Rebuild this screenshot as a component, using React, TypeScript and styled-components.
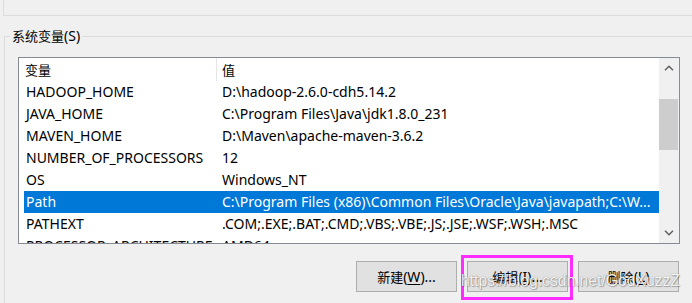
import React from "react";
import styled, { createGlobalStyle } from "styled-components";

const GlobalStyle = createGlobalStyle`
  html, body {
    margin: 0;
    padding: 0;
    background: #f0f0f0;
  }
  body {
    font-family: "Noto Sans", "Noto Sans CJK SC", sans-serif;
    font-size: 14px;
    color: #000;
  }
`;

const Window = styled.div`
  position: relative;
  width: 692px;
  height: 303px;
  overflow: hidden;
  background: #f0f0f0;
`;

// bottom-left corner of the group box above (user variables)
const UpperGroupEdge = styled.div`
  height: 15px;
  margin-left: 3px;
  border-left: 1px solid #dcdcdc;
  border-bottom: 1px solid #dcdcdc;
`;

const Group = styled.fieldset`
  margin: 10px 0 0 4px;
  padding: 11px 0 0 13px;
  height: 300px;
  min-width: 0;
  border: 1px solid #dcdcdc;
  border-right: none;
  border-bottom: none;
`;

const Legend = styled.legend`
  margin-left: -8px;
  padding: 0 2px;
  line-height: 20px;
  font-size: 14px;
`;

const Han = styled.span`
  font-family: "Noto Sans CJK SC", sans-serif;
  font-size: 13px;
`;

const Key = styled.span`
  text-decoration: underline;
  text-underline-offset: 2px;
`;

const Content = styled.div`
  width: 662px;
  display: flex;
  flex-direction: column;
`;

const ListBox = styled.div`
  height: 185px;
  border: 1px solid #868b93;
  background: #fff;
  display: flex;
  overflow: hidden;
`;

const Rows = styled.div`
  flex: 1;
  min-width: 0;
  overflow: hidden;
`;

const Header = styled.div`
  display: grid;
  grid-template-columns: 198px 1fr;
  height: 23px;
  line-height: 23px;
`;

const HeaderCell = styled.div<{ $first?: boolean }>`
  padding-left: ${(p) => (p.$first ? "6px" : "5px")};
  border-right: ${(p) => (p.$first ? "1px solid #e5e5e5" : "none")};
`;

const Row = styled.div<{ $selected?: boolean }>`
  display: grid;
  grid-template-columns: 193px 1fr;
  height: 22px;
  line-height: 22px;
  margin-left: 5px;
  white-space: nowrap;
  background: ${(p) => (p.$selected ? "#0078d7" : "transparent")};
  color: ${(p) => (p.$selected ? "#fff" : "#000")};
`;

const Cell = styled.div<{ $first?: boolean }>`
  padding-left: ${(p) => (p.$first ? "2px" : "5px")};
  overflow: hidden;
`;

const Scrollbar = styled.div`
  width: 20px;
  background: #f0f0f0;
  display: flex;
  flex-direction: column;
`;

const Arrow = styled.div`
  height: 20px;
  display: flex;
  align-items: center;
  justify-content: center;
`;

const Track = styled.div`
  flex: 1;
  padding-top: 21px;
`;

const Thumb = styled.div`
  height: 51px;
  margin-right: 1px;
  background: #cdcdcd;
`;

const ButtonRow = styled.div`
  display: flex;
  justify-content: flex-end;
  gap: 10px;
  margin-top: 17px;
  padding-right: 1px;
`;

const Highlight = styled.div`
  position: relative;
  display: flex;

  &::after {
    content: "";
    position: absolute;
    top: -6px;
    left: -6px;
    right: -5px;
    bottom: -8px;
    border: 3px solid #ff2cff;
    pointer-events: none;
  }
`;

const Button = styled.button`
  width: 101px;
  height: 31px;
  padding: 0;
  border: 1px solid #adadad;
  background: #e1e1e1;
  font-family: "Noto Sans", "Noto Sans CJK SC", sans-serif;
  font-size: 14px;
  color: #000;
`;

const Watermark = styled.div`
  position: absolute;
  left: 461px;
  top: 272px;
  font-family: "Liberation Sans", Arial, sans-serif;
  font-size: 15.7px;
  line-height: 18px;
  color: rgba(255, 255, 255, 0.92);
  text-shadow: 0 0 1px rgba(0, 0, 0, 0.45), 1px 1px 1px rgba(0, 0, 0, 0.25);
  white-space: nowrap;
  pointer-events: none;
`;

type Variable = { name: string; value: string };

const variables: Variable[] = [
  { name: "HADOOP_HOME", value: "D:\\hadoop-2.6.0-cdh5.14.2" },
  { name: "JAVA_HOME", value: "C:\\Program Files\\Java\\jdk1.8.0_231" },
  { name: "MAVEN_HOME", value: "D:\\Maven\\apache-maven-3.6.2" },
  { name: "NUMBER_OF_PROCESSORS", value: "12" },
  { name: "OS", value: "Windows_NT" },
  {
    name: "Path",
    value: "C:\\Program Files (x86)\\Common Files\\Oracle\\Java\\javapath;C:\\W...",
  },
  { name: "PATHEXT", value: ".COM;.EXE;.BAT;.CMD;.VBS;.VBE;.JS;.JSE;.WSF;.WSH;.MSC" },
  { name: "PROCESSOR_ARCHITECTURE", value: "AMD64" },
];

const Chevron = ({ up }: { up?: boolean }) => (
  <svg width="10" height="6" viewBox="0 0 10 6">
    <polyline
      points={up ? "1,5.2 5,1.2 9,5.2" : "1,0.8 5,4.8 9,0.8"}
      fill="none"
      stroke="#606060"
      strokeWidth="1.5"
    />
  </svg>
);

const App = () => {
  const selected = "Path";
  return (
    <Window>
      <GlobalStyle />
      <UpperGroupEdge />
      <Group>
        <Legend>
          <Han>系统变量</Han>(S)
        </Legend>
        <Content>
          <ListBox>
            <Rows>
              <Header>
                <HeaderCell $first>
                  <Han>变量</Han>
                </HeaderCell>
                <HeaderCell>
                  <Han>值</Han>
                </HeaderCell>
              </Header>
              {variables.map((v) => (
                <Row key={v.name} $selected={v.name === selected}>
                  <Cell $first>{v.name}</Cell>
                  <Cell>{v.value}</Cell>
                </Row>
              ))}
            </Rows>
            <Scrollbar>
              <Arrow>
                <Chevron up />
              </Arrow>
              <Track>
                <Thumb />
              </Track>
              <Arrow>
                <Chevron />
              </Arrow>
            </Scrollbar>
          </ListBox>
          <ButtonRow>
            <Button>
              <Han>新建</Han>(<Key>W</Key>)...
            </Button>
            <Highlight>
              <Button>
                <Han>编辑</Han>(<Key>I</Key>)...
              </Button>
            </Highlight>
            <Button>
              <Han>删除</Han>(<Key>L</Key>)
            </Button>
          </ButtonRow>
        </Content>
      </Group>
      <Watermark>https://blog.csdn.net/GodXuzzZ</Watermark>
    </Window>
  );
};

export default App;
